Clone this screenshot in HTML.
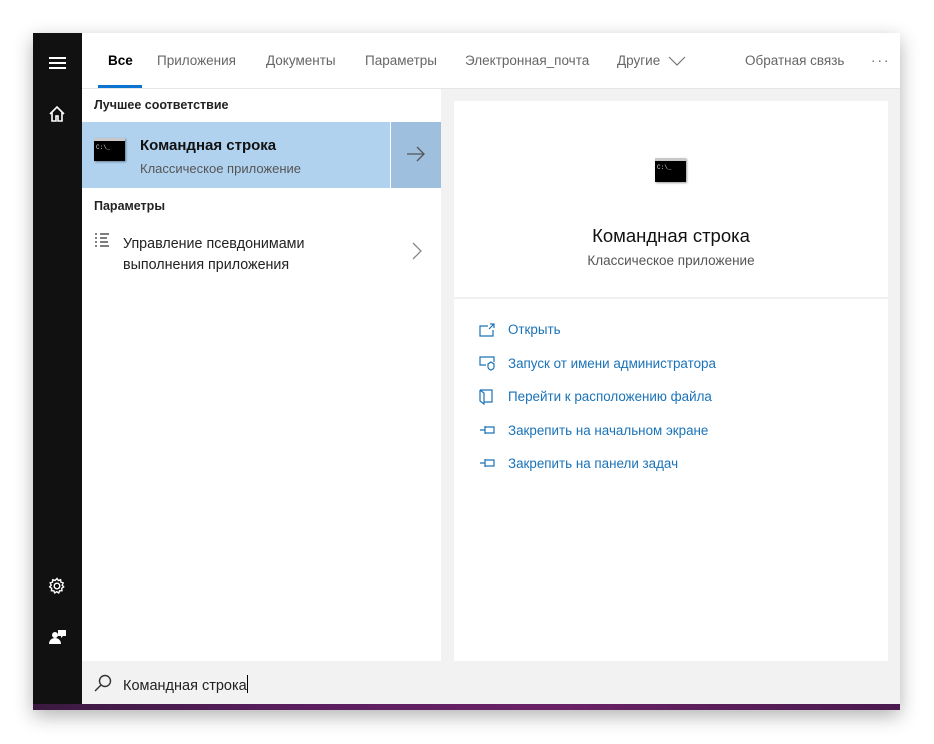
<!DOCTYPE html>
<html><head><meta charset="utf-8"><style>
*{margin:0;padding:0;box-sizing:border-box}
body{width:934px;height:744px;background:#fff;position:relative;overflow:hidden;font-family:"Liberation Sans","Noto Sans CJK SC",sans-serif}
.win{position:absolute;left:33px;top:33px;width:867px;height:677px;background:#f2f2f2;box-shadow:0 6px 18px rgba(0,0,0,.3)}
.side{position:absolute;left:0;top:0;width:49px;height:671px;background:#111}
.top{position:absolute;left:49px;top:0;width:818px;height:56px;background:#fff;border-bottom:1px solid #e6e6e6}
.tab{position:absolute;top:20px;font-size:13.5px;color:#666}
.left{position:absolute;left:49px;top:56px;width:359px;height:572px;background:#fff}
.card{position:absolute;left:421px;top:68px;width:434px;height:560px;background:#fff}
.search{position:absolute;left:49px;top:628px;width:818px;height:43px;background:#f2f2f2}
.purple{position:absolute;left:0;top:671px;width:867px;height:6px;background:linear-gradient(90deg,#3a1a40,#5a1e5e 30%,#6a2266 60%,#4a1a4e)}
.cmd{position:absolute;background:#000;border-top:3px solid #c8c8c8;box-shadow:1px 1px 2px rgba(0,0,0,.4);color:#ddd;font-family:"Liberation Mono",monospace}
.act{position:absolute;left:54px;font-size:13.4px;color:#1a73b8}
.ic{position:absolute;left:25px}
</style></head><body>
<div class="win">
 <div class="side">
  <div style="position:absolute;left:16px;width:17px;height:2px;background:#fff;box-shadow:0 5px 0 #fff,0 10px 0 #fff;top:24px"></div>
  <svg style="position:absolute;left:15px;top:72px" width="18" height="18" viewBox="0 0 18 18" fill="none" stroke="#fff" stroke-width="1.6"><path d="M2 9 9 2l7 7M4 7v9h4v-5h2v5h4V7"/></svg>
  <svg style="position:absolute;left:15px;top:544px" width="18" height="18" viewBox="0 0 18 18" fill="none" stroke="#fff" stroke-width="1.4"><circle cx="9" cy="9" r="2.8"/><path d="M9 1.5l1.3 2 2.3-.8.3 2.4 2.3.8-1 2.2 1.5 1.8-2 1.4.3 2.4-2.4.1-.9 2.2-2-1.3-2 1.3-.9-2.2-2.4-.1.3-2.4-2-1.4 1.5-1.8-1-2.2 2.3-.8.3-2.4 2.3.8z"/></svg>
  <svg style="position:absolute;left:16px;top:595px" width="18" height="18" viewBox="0 0 18 18" fill="#fff"><circle cx="6" cy="7" r="3"/><path d="M0 16c0-4 3-6 6-6s6 2 6 6z"/><path d="M9 2h8v6h-3l-2 2V8H9z"/></svg>
 </div>
 <div class="top">
  <div class="tab" style="left:26px;color:#000;font-weight:bold">Все</div>
  <div style="position:absolute;left:16px;top:52px;width:44px;height:3px;background:#0a74d0"></div>
  <div class="tab" style="left:75px">Приложения</div>
  <div class="tab" style="left:184px">Документы</div>
  <div class="tab" style="left:283px">Параметры</div>
  <div class="tab" style="left:383px">Электронная_почта</div>
  <div class="tab" style="left:535px">Другие</div>
  <svg style="position:absolute;left:586px;top:23px" width="18" height="10" viewBox="0 0 18 10" fill="none" stroke="#777" stroke-width="1.2"><path d="M1 1l8 8 8-8"/></svg>
  <div class="tab" style="left:663px">Обратная связь</div>
  <div class="tab" style="left:789px;letter-spacing:2px">···</div>
 </div>
 <div class="left">
  <div style="position:absolute;left:12px;top:9px;font-size:12.5px;font-weight:bold;color:#222">Лучшее соответствие</div>
  <div style="position:absolute;left:0;top:33px;width:308px;height:66px;background:#b0d2ef"></div>
  <div style="position:absolute;left:309px;top:33px;width:50px;height:66px;background:#9ebfde"></div>
  <svg style="position:absolute;left:324px;top:57px" width="20" height="16" viewBox="0 0 20 16" fill="none" stroke="#555" stroke-width="1.3"><path d="M1 8h17M11 1l7 7-7 7"/></svg>
  <div class="cmd" style="left:12px;top:49px;width:31px;height:23px;font-size:6px;padding:3px 0 0 2px">C:\_</div>
  <div style="position:absolute;left:58px;top:48px;font-size:15px;font-weight:bold;color:#111">Командная строка</div>
  <div style="position:absolute;left:58px;top:72px;font-size:13px;color:#555">Классическое приложение</div>
  <div style="position:absolute;left:12px;top:110px;font-size:12.5px;font-weight:bold;color:#222">Параметры</div>
  <svg style="position:absolute;left:12px;top:144px" width="16" height="14" viewBox="0 0 16 14" fill="none" stroke="#333" stroke-width="1.2"><path d="M1 1h2M1 5h2M1 9h2M1 13h2M6 1h9M6 5h7M6 9h8M6 13h9"/></svg>
  <div style="position:absolute;left:41px;top:145px;font-size:14.3px;color:#222;line-height:21px">Управление псевдонимами<br>выполнения приложения</div>
  <svg style="position:absolute;left:330px;top:153px" width="10" height="18" viewBox="0 0 10 18" fill="none" stroke="#888" stroke-width="1.3"><path d="M1 1l8 8-8 8"/></svg>
 </div>
 <div class="card">
  <div class="cmd" style="left:201px;top:57px;width:31px;height:24px;font-size:6px;padding:3px 0 0 2px">C:\_</div>
  <div style="position:absolute;left:0;width:434px;text-align:center;top:124px;font-size:18.5px;color:#111">Командная строка</div>
  <div style="position:absolute;left:0;width:434px;text-align:center;top:152px;font-size:13.5px;color:#555">Классическое приложение</div>
  <div style="position:absolute;left:0;top:196px;width:434px;height:2px;background:#f0f0f0"></div>
  <svg class="ic" style="top:222px" width="16" height="14" viewBox="0 0 16 14" fill="none" stroke="#1a73b8" stroke-width="1.2"><path d="M9 3H1v10h13V7M11 1h4v4M15 1l-5 5"/></svg>
  <div class="act" style="top:221px">Открыть</div>
  <svg class="ic" style="top:255px" width="17" height="15" viewBox="0 0 17 15" fill="none" stroke="#1a73b8" stroke-width="1.2"><path d="M7 9H1V1h14v5M9 8l3-2 3 2v3c0 2-3 3-3 3s-3-1-3-3z"/></svg>
  <div class="act" style="top:255px">Запуск от имени администратора</div>
  <svg class="ic" style="top:288px" width="14" height="16" viewBox="0 0 14 16" fill="none" stroke="#1a73b8" stroke-width="1.2"><path d="M1 1h12v12H5M1 1v11l4 3V4L1 1"/></svg>
  <div class="act" style="top:288px">Перейти к расположению файла</div>
  <svg class="ic" style="top:324px" width="16" height="10" viewBox="0 0 16 10" fill="none" stroke="#1a73b8" stroke-width="1.2"><path d="M1 5h5M6 1v8M6 2h9v6H6"/></svg>
  <div class="act" style="top:322px">Закрепить на начальном экране</div>
  <svg class="ic" style="top:357px" width="16" height="10" viewBox="0 0 16 10" fill="none" stroke="#1a73b8" stroke-width="1.2"><path d="M1 5h5M6 1v8M6 2h9v6H6"/></svg>
  <div class="act" style="top:355px">Закрепить на панели задач</div>
 </div>
 <div class="search">
  <svg style="position:absolute;left:12px;top:13px" width="18" height="18" viewBox="0 0 18 18" fill="none" stroke="#333" stroke-width="1.4"><circle cx="11" cy="7" r="5.5"/><path d="M7 11l-6 6"/></svg>
  <div style="position:absolute;left:41px;top:14px;font-size:14.5px;color:#222">Командная строка<span style="display:inline-block;width:1px;height:18px;background:#000;vertical-align:-3px"></span></div>
 </div>
 <div class="purple"></div>
</div>
</body></html>
